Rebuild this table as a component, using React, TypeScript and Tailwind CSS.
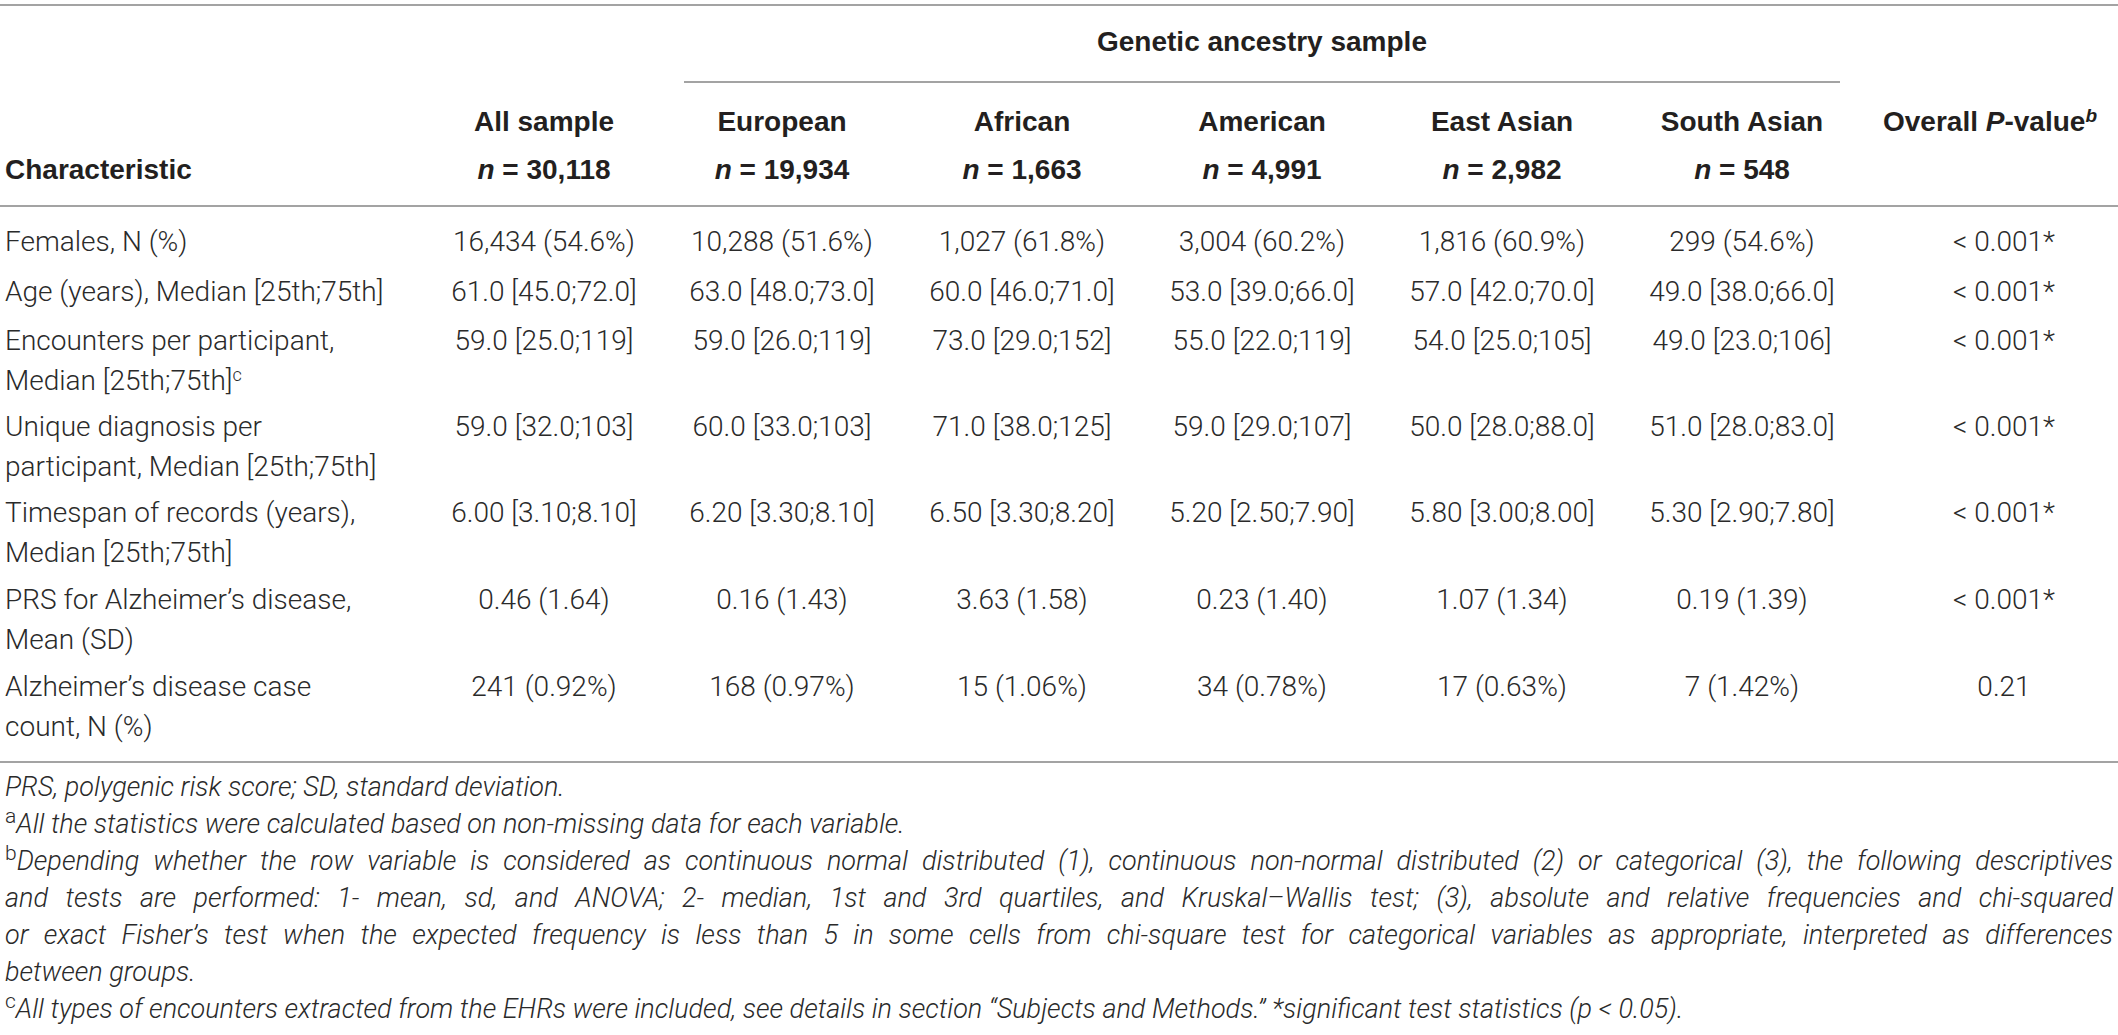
import type { ReactNode } from "react";

type Row = {
  label: ReactNode;
  vals: string[];
  p: string;
  pb: string;
};

const rows: Row[] = [
  {
    label: "Females, N (%)",
    vals: ["16,434 (54.6%)", "10,288 (51.6%)", "1,027 (61.8%)", "3,004 (60.2%)", "1,816 (60.9%)", "299 (54.6%)"],
    p: "< 0.001*",
    pb: "pb-[10px]",
  },
  {
    label: "Age (years), Median [25th;75th]",
    vals: ["61.0 [45.0;72.0]", "63.0 [48.0;73.0]", "60.0 [46.0;71.0]", "53.0 [39.0;66.0]", "57.0 [42.0;70.0]", "49.0 [38.0;66.0]"],
    p: "< 0.001*",
    pb: "pb-[9px]",
  },
  {
    label: (
      <>
        Encounters per participant,
        <br />
        Median [25th;75th]<sup className="text-[18px]">c</sup>
      </>
    ),
    vals: ["59.0 [25.0;119]", "59.0 [26.0;119]", "73.0 [29.0;152]", "55.0 [22.0;119]", "54.0 [25.0;105]", "49.0 [23.0;106]"],
    p: "< 0.001*",
    pb: "pb-[6px]",
  },
  {
    label: (
      <>
        Unique diagnosis per
        <br />
        participant, Median [25th;75th]
      </>
    ),
    vals: ["59.0 [32.0;103]", "60.0 [33.0;103]", "71.0 [38.0;125]", "59.0 [29.0;107]", "50.0 [28.0;88.0]", "51.0 [28.0;83.0]"],
    p: "< 0.001*",
    pb: "pb-[6px]",
  },
  {
    label: (
      <>
        Timespan of records (years),
        <br />
        Median [25th;75th]
      </>
    ),
    vals: ["6.00 [3.10;8.10]", "6.20 [3.30;8.10]", "6.50 [3.30;8.20]", "5.20 [2.50;7.90]", "5.80 [3.00;8.00]", "5.30 [2.90;7.80]"],
    p: "< 0.001*",
    pb: "pb-[7px]",
  },
  {
    label: (
      <>
        PRS for Alzheimer’s disease,
        <br />
        Mean (SD)
      </>
    ),
    vals: ["0.46 (1.64)", "0.16 (1.43)", "3.63 (1.58)", "0.23 (1.40)", "1.07 (1.34)", "0.19 (1.39)"],
    p: "< 0.001*",
    pb: "pb-[7px]",
  },
  {
    label: (
      <>
        Alzheimer’s disease case
        <br />
        count, N (%)
      </>
    ),
    vals: ["241 (0.92%)", "168 (0.97%)", "15 (1.06%)", "34 (0.78%)", "17 (0.63%)", "7 (1.42%)"],
    p: "0.21",
    pb: "pb-[14px]",
  },
];

const groups = [
  { name: "All sample", n: "30,118" },
  { name: "European", n: "19,934" },
  { name: "African", n: "1,663" },
  { name: "American", n: "4,991" },
  { name: "East Asian", n: "2,982" },
  { name: "South Asian", n: "548" },
];

function Rule() {
  return <div className="h-[2px] bg-[#a3a3a3]" />;
}

export default function App() {
  return (
    <div className="w-[2118px] bg-white text-[#2a2a2a] font-['Liberation_Sans',Arial,sans-serif]">
      <div className="pt-[4px]">
        <Rule />
      </div>

      {/* header */}
      <div className="grid grid-cols-[426px_236px_240px_240px_240px_240px_240px_1fr] pt-[16px] text-[28px] font-bold leading-[40px] text-[#231f20]">
        <div className="col-start-3 col-span-5 flex flex-col">
          <div className="text-center">Genetic ancestry sample</div>
          <div className="mx-[22px] mt-[19px] h-[2px] bg-[#a3a3a3]" />
        </div>
      </div>
      <div className="grid grid-cols-[426px_236px_240px_240px_240px_240px_240px_1fr] pt-[19px] pb-[15px] text-[28px] font-bold leading-[40px] text-[#231f20]">
        <div className="flex flex-col justify-end pl-[5px]">Characteristic</div>
        {groups.map((g) => (
          <div key={g.name} className="flex flex-col items-center gap-[8px] whitespace-nowrap">
            <div>{g.name}</div>
            <div>
              <span className="italic">n</span> = {g.n}
            </div>
          </div>
        ))}
        <div className="text-center whitespace-nowrap">
          Overall <span className="italic">P</span>-value<sup className="italic text-[19px]">b</sup>
        </div>
      </div>
      <Rule />

      {/* body */}
      <div className="pt-[15px] font-['Roboto','Liberation_Sans',sans-serif] text-[28px] font-light leading-[40px]">
        {rows.map((r, i) => (
          <div
            key={i}
            className={`grid grid-cols-[426px_236px_240px_240px_240px_240px_240px_1fr] ${r.pb}`}
          >
            <div className="pl-[5px] whitespace-nowrap">{r.label}</div>
            {r.vals.map((v, j) => (
              <div key={j} className="text-center whitespace-nowrap">
                {v}
              </div>
            ))}
            <div className="pl-[28px] text-center whitespace-nowrap">{r.p}</div>
          </div>
        ))}
      </div>
      <Rule />

      {/* footnotes */}
      <div className="mt-[6px] px-[5px] font-['Roboto','Liberation_Sans',sans-serif] text-[27px] font-light italic leading-[37px]">
        <div>PRS, polygenic risk score; SD, standard deviation.</div>
        <div>
          <sup className="not-italic text-[21px]">a</sup>All the statistics were calculated based on non-missing data for each variable.
        </div>
        <div className="whitespace-nowrap text-justify [text-align-last:justify]">
          <sup className="not-italic text-[21px]">b</sup>Depending whether the row variable is considered as continuous normal distributed (1), continuous non-normal distributed (2) or categorical (3), the following descriptives
        </div>
        <div className="whitespace-nowrap text-justify [text-align-last:justify]">
          and tests are performed: 1- mean, sd, and ANOVA; 2- median, 1st and 3rd quartiles, and Kruskal–Wallis test; (3), absolute and relative frequencies and chi-squared
        </div>
        <div className="whitespace-nowrap text-justify [text-align-last:justify]">
          or exact Fisher’s test when the expected frequency is less than 5 in some cells from chi-square test for categorical variables as appropriate, interpreted as differences
        </div>
        <div>between groups.</div>
        <div>
          <sup className="not-italic text-[21px]">c</sup>All types of encounters extracted from the EHRs were included, see details in section “Subjects and Methods.” *significant test statistics (p &lt; 0.05).
        </div>
      </div>
    </div>
  );
}
